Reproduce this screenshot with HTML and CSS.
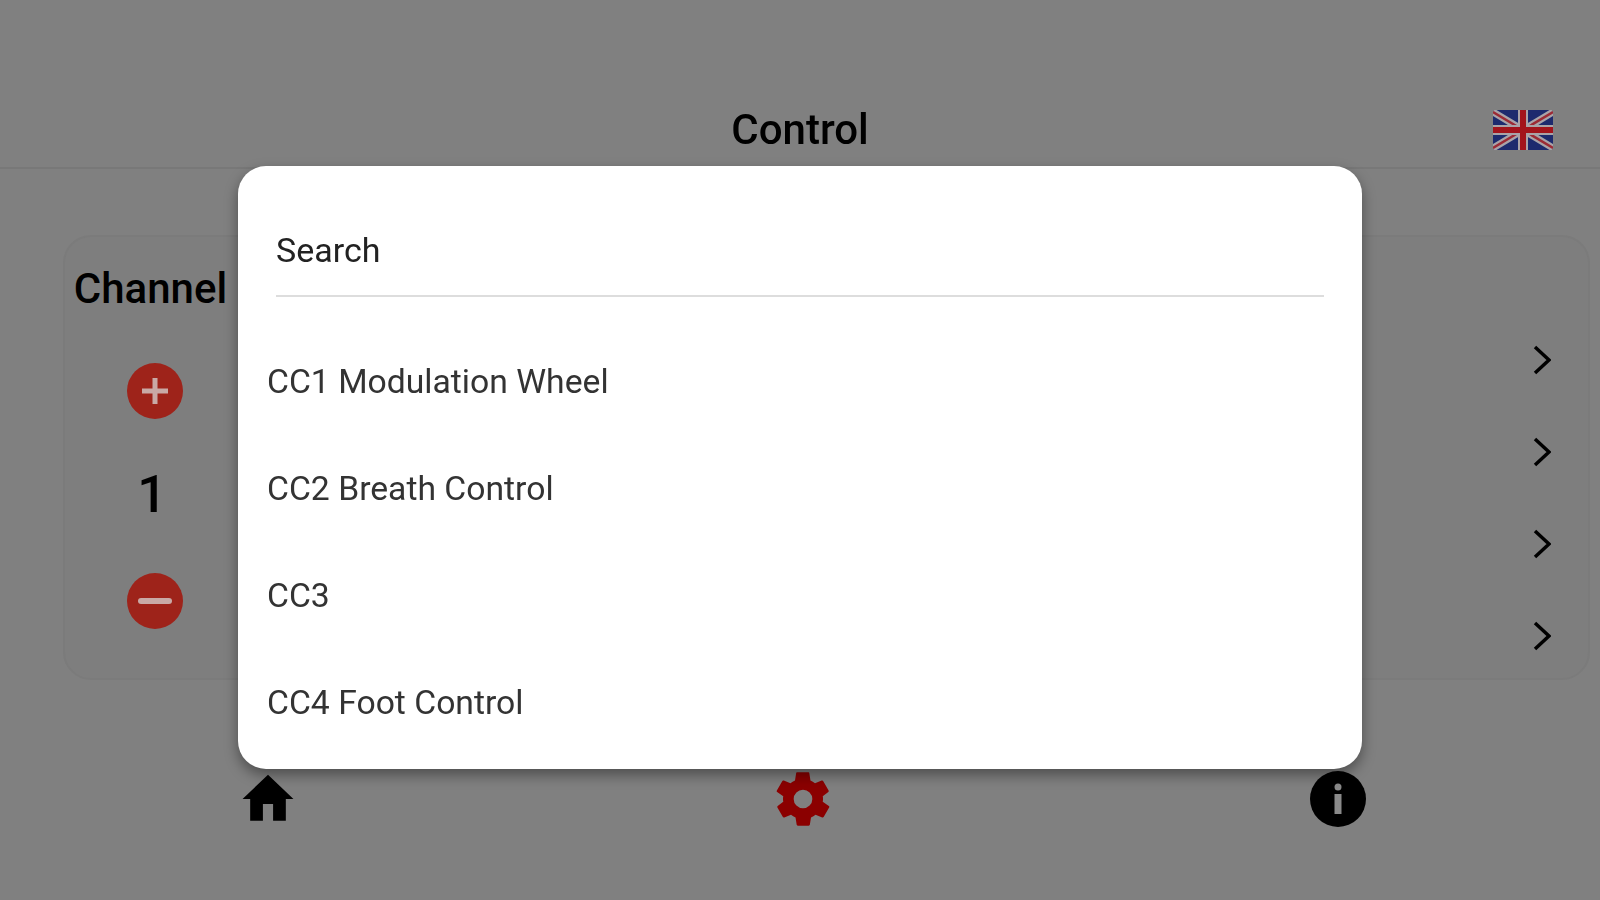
FILE: index.html
```html
<!DOCTYPE html>
<html lang="en">

<head>
    <meta charset="UTF-8">
    <title>Control</title>
    <link rel="stylesheet" href="styles.css">
</head>

<body>
    <div class="app">
        <header class="topBar">
            <h1>Control</h1>
            <svg class="flag" viewBox="0 0 60 40">
                <rect width="60" height="40" rx="3" fill="#1d2a6e" />
                <path d="M0 2 L60 38 M60 2 L0 38" stroke="#a9a3a8" stroke-width="7" />
                <path d="M0 2 L60 38 M60 2 L0 38" stroke="#9c2a35" stroke-width="2.5" />
                <path d="M30 0 V40 M0 20 H60" stroke="#a9a3a8" stroke-width="10" />
                <path d="M30 0 V40 M0 20 H60" stroke="#a3141c" stroke-width="6" />
            </svg>
        </header>

        <main class="card">
            <div class="channel">
                <h2>Channel</h2>
                <svg class="roundBtn" viewBox="0 0 56 56">
                    <circle cx="28" cy="28" r="28" fill="#9e231a" />
                    <path d="M28 15 V41 M15 28 H41" stroke="#c9a9a6" stroke-width="5" />
                </svg>
                <div class="channelNum">1</div>
                <svg class="roundBtn" viewBox="0 0 56 56">
                    <circle cx="28" cy="28" r="28" fill="#9e231a" />
                    <path d="M14 28 H42" stroke="#c9a9a6" stroke-width="6" stroke-linecap="round" />
                </svg>
            </div>
            <div class="arrows">
                <svg class="chevron" viewBox="0 0 18 30"><path d="M2 2 L16 15 L2 28" /></svg>
                <svg class="chevron" viewBox="0 0 18 30"><path d="M2 2 L16 15 L2 28" /></svg>
                <svg class="chevron" viewBox="0 0 18 30"><path d="M2 2 L16 15 L2 28" /></svg>
                <svg class="chevron" viewBox="0 0 18 30"><path d="M2 2 L16 15 L2 28" /></svg>
            </div>
        </main>

        <nav class="bottomNav">
            <div class="navItem">
                <svg class="navIcon" viewBox="1 1 22 22" fill="#000">
                    <path d="M10 20.500v-6.500h4v6.500h5v-8.500h3L12 2.500 2 12h3v8.500z" />
                </svg>
            </div>
            <div class="navItem">
                <svg class="navIcon" viewBox="1.500 1.500 21 21" fill="#8b0000">
                    <path fill-rule="evenodd" d="M19.400 13c.1-.3.1-.7.1-1s0-.7-.1-1l2.100-1.600c.2-.2.2-.4.1-.6l-2-3.500c-.1-.2-.4-.3-.6-.2l-2.500 1c-.5-.4-1.100-.7-1.700-1l-.4-2.600c0-.3-.2-.5-.5-.5h-4c-.3 0-.5.2-.5.5l-.4 2.600c-.6.3-1.200.6-1.700 1l-2.500-1c-.2-.1-.5 0-.6.2l-2 3.500c-.1.2-.1.5.1.6L4.600 11c-.1.3-.1.7-.1 1s0 .7.1 1l-2.100 1.600c-.2.2-.2.4-.1.6l2 3.500c.1.2.4.3.6.2l2.500-1c.5.4 1.100.7 1.700 1l.4 2.600c0 .3.2.5.5.5h4c.3 0 .5-.2.5-.5l.4-2.600c.6-.3 1.200-.6 1.700-1l2.500 1c.2.1.5 0 .6-.2l2-3.500c.1-.2.1-.5-.1-.6zM12 15.500a3.500 3.500 0 1 1 0-7 3.500 3.500 0 0 1 0 7z" />
                </svg>
            </div>
            <div class="navItem">
                <svg class="navIcon" viewBox="0 0 56 56">
                    <circle cx="28" cy="28" r="28" fill="#000" />
                    <circle cx="28" cy="16" r="3.500" fill="#8a8a8a" />
                    <rect x="24.500" y="23" width="7" height="20" fill="#8a8a8a" />
                </svg>
            </div>
        </nav>
    </div>

    <div class="modal">
        <div class="searchBox">Search</div>
        <ul class="ccList">
            <li>CC1 Modulation Wheel</li>
            <li>CC2 Breath Control</li>
            <li>CC3</li>
            <li>CC4 Foot Control</li>
        </ul>
    </div>
</body>

</html>
```

FILE: styles.css
```css
* {
    margin: 0;
    padding: 0;
    box-sizing: border-box;
    font-family: "Roboto", sans-serif;
}

body {
    width: 1600px;
    height: 900px;
    overflow: hidden;
    background: #808080;
    color: #000;
    position: relative;
}

.app {
    filter: blur(0.7px);
}

.topBar {
    height: 169px;
    display: flex;
    justify-content: center;
    align-items: center;
    padding-top: 92px;
    border-bottom: 2px solid #787878;
    position: relative;
}

.topBar h1 {
    font-size: 42px;
    font-weight: 500;
}

.flag {
    width: 60px;
    height: 40px;
    position: absolute;
    right: 47px;
    top: 110px;
}

.card {
    height: 445px;
    margin: 66px 10px 0 63px;
    padding: 0 37px 0 7px;
    background: #7e7e7e;
    border: 2px solid #7b7b7b;
    border-radius: 28px;
    display: flex;
    justify-content: space-between;
}

.channel {
    width: 160px;
    display: flex;
    flex-direction: column;
    align-items: center;
}

.channel h2 {
    font-size: 42px;
    font-weight: 500;
    margin: 27px 3px 0 0;
}

.roundBtn {
    width: 56px;
    height: 56px;
    margin-top: 50px;
    margin-left: 6px;
}

.channelNum {
    font-size: 52px;
    font-weight: 500;
    line-height: 60px;
    margin-top: 46px;
}

.channelNum + .roundBtn {
    margin-top: 48px;
}

.arrows {
    display: flex;
    flex-direction: column;
    gap: 62px;
    padding-top: 108px;
}

.chevron {
    width: 18px;
    height: 30px;
    fill: none;
    stroke: #000;
    stroke-width: 3.5;
}

.bottomNav {
    display: flex;
    margin-top: 91px;
}

.navItem {
    flex: 0 0 535px;
    display: flex;
    justify-content: center;
}

.navIcon {
    width: 56px;
    height: 56px;
}

.modal {
    position: absolute;
    left: 238px;
    top: 166px;
    width: 1124px;
    height: 603px;
    background: #fff;
    border-radius: 28px;
    box-shadow: 0 6px 14px rgba(0, 0, 0, 0.4);
    padding: 0 38px 0 29px;
    filter: blur(0.5px);
}

.searchBox {
    margin: 0 0 0 9px;
    height: 131px;
    padding-top: 64px;
    font-size: 34px;
    line-height: 40px;
    color: #222;
    border-bottom: 2px solid #ddd;
}

.ccList {
    list-style: none;
    margin-top: 62px;
}

.ccList li {
    height: 107px;
    font-size: 33.7px;
    line-height: 46px;
    color: #333;
}
```
